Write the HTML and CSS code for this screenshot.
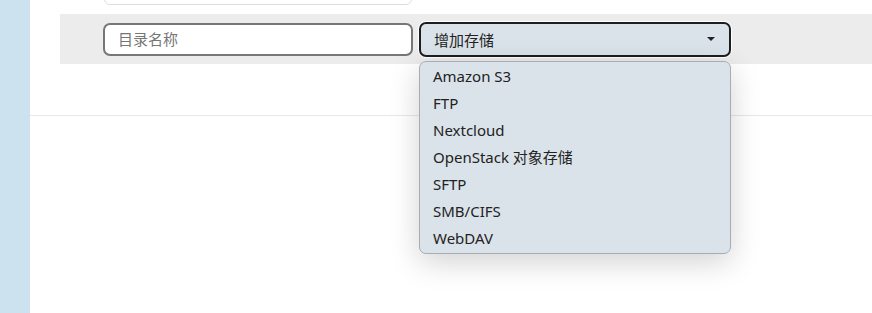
FILE: index.html
```html
<!DOCTYPE html>
<html lang="zh">
<head>
    <meta charset="UTF-8">
    <title>外部存储</title>
    <link rel="stylesheet" href="styles.css">
</head>
<body>
    <div class="layout">
        <div class="sidebar"></div>
        <div class="main">
            <div class="prev-box"></div>
            <div class="mount-row">
                <input class="dir-input" type="text" placeholder="目录名称">
                <div class="select-wrap">
                    <div class="select-box">
                        <span>增加存储</span>
                        <span class="caret"></span>
                    </div>
                    <ul class="menu">
                        <li>Amazon S3</li>
                        <li>FTP</li>
                        <li>Nextcloud</li>
                        <li>OpenStack 对象存储</li>
                        <li>SFTP</li>
                        <li>SMB/CIFS</li>
                        <li>WebDAV</li>
                    </ul>
                </div>
            </div>
            <div class="section-line"></div>
        </div>
    </div>
</body>
</html>
```

FILE: styles.css
```css
body {
    margin: 0;
    font-family: "Noto Sans", "Noto Sans CJK SC", sans-serif;
    background: #fff;
    color: #222;
}
.layout {
    display: flex;
    height: 313px;
    overflow: hidden;
}
.sidebar {
    width: 30px;
    flex-shrink: 0;
    background: #cde2ef;
}
.main {
    flex: 1;
}
.prev-box {
    width: 306px;
    height: 12px;
    margin: -9px 0 0 74px;
    border: 1px solid #ddd;
    border-radius: 6px;
}
.mount-row {
    display: flex;
    gap: 6px;
    align-items: center;
    margin: 9px 0 0 30px;
    padding-left: 43px;
    height: 50px;
    background: #ececec;
}
.dir-input {
    width: 310px;
    height: 33px;
    box-sizing: border-box;
    border: 2px solid #777;
    border-radius: 7px;
    padding: 0 13px;
    font-family: inherit;
    font-size: 15px;
    color: #222;
    background: #fff;
}
.dir-input::placeholder {
    color: #767676;
}
.select-wrap {
    position: relative;
}
.select-box {
    width: 312px;
    height: 35px;
    box-sizing: border-box;
    display: flex;
    align-items: center;
    justify-content: space-between;
    padding: 0 14px 0 13px;
    border: 2px solid #1e1e1e;
    border-radius: 7px;
    background: #dbe3ea;
    box-shadow: 0 0 0 1px #fff;
    font-size: 15px;
}
.caret {
    width: 0;
    height: 0;
    border-left: 4px solid transparent;
    border-right: 4px solid transparent;
    border-top: 4px solid #222;
}
.menu {
    position: absolute;
    top: 39px;
    left: 0;
    width: 312px;
    box-sizing: border-box;
    margin: 0;
    padding: 1px 0;
    list-style: none;
    background: #dbe3ea;
    border: 1px solid #a9adb1;
    border-radius: 7px;
    box-shadow: 0 8px 30px rgba(0, 0, 0, 0.18);
    font-size: 15px;
}
.menu li {
    height: 27px;
    line-height: 26px;
    padding-left: 13px;
}
.section-line {
    margin-top: 51px;
    border-top: 1px solid #e8e8e8;
}
```
